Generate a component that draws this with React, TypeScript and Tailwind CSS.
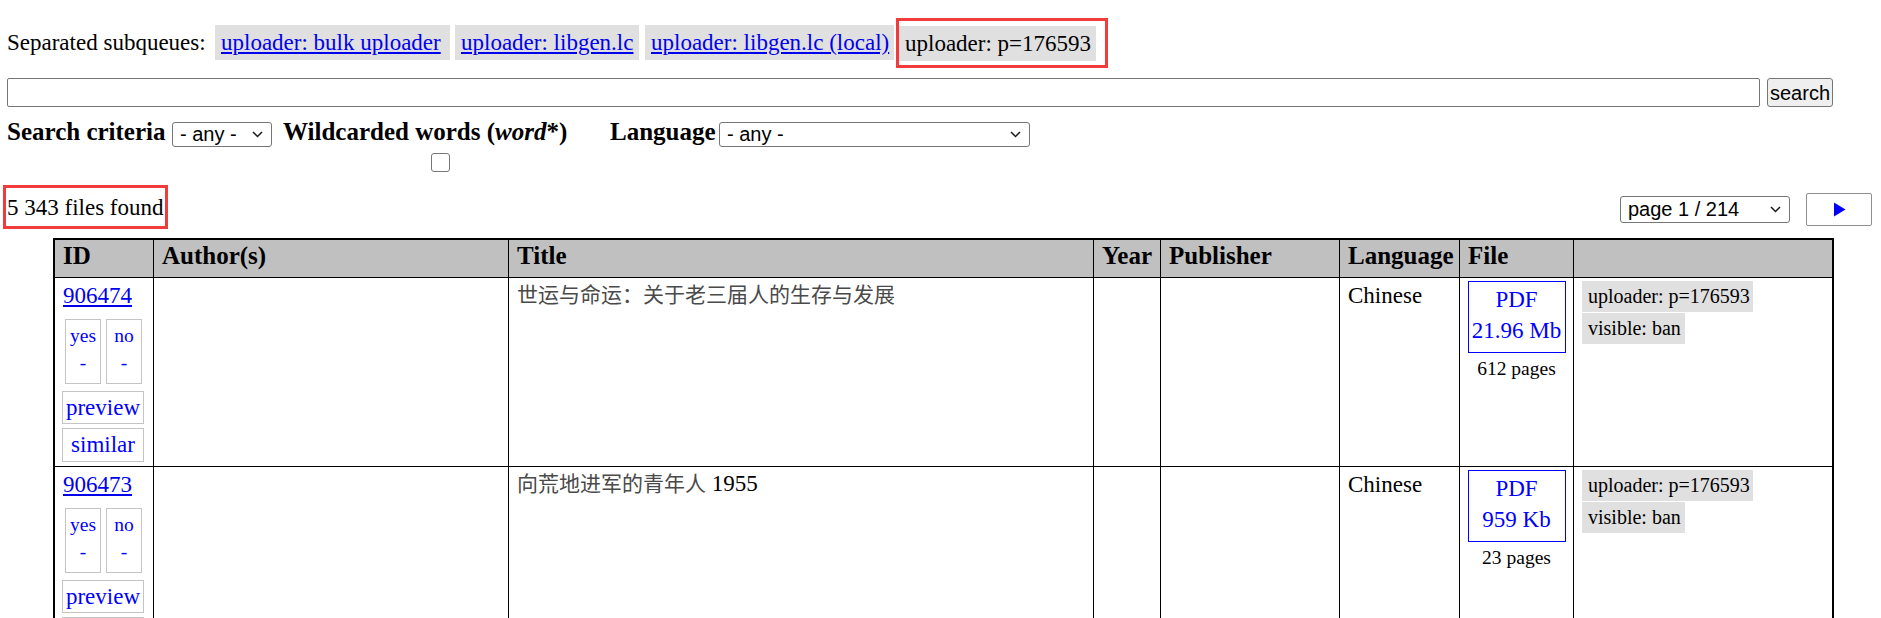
import React from "react";

function Chevron() {
  return (
    <svg width="11" height="7" viewBox="0 0 11 7" className="shrink-0">
      <path d="M1 1 L5.5 5.5 L10 1" fill="none" stroke="#1a1a1a" strokeWidth="1.5" />
    </svg>
  );
}

function Select({ label, className }: { label: string; className: string }) {
  return (
    <div
      className={`flex items-center justify-between border border-[#767676] rounded-[3px] bg-white pl-[7px] pr-[8px] font-['Liberation_Sans',Arial,sans-serif] text-[20px] text-black ${className}`}
    >
      <span className="leading-[23px] whitespace-nowrap">{label}</span>
      <Chevron />
    </div>
  );
}

type Row = {
  id: string;
  title: string;
  titleExtra?: string;
  size: string;
  pages: string;
};

const rows: Row[] = [
  {
    id: "906474",
    title: "世运与命运：关于老三届人的生存与发展",
    size: "21.96 Mb",
    pages: "612 pages",
  },
  {
    id: "906473",
    title: "向荒地进军的青年人",
    titleExtra: " 1955",
    size: "959 Kb",
    pages: "23 pages",
  },
];

const gridCols =
  "grid grid-cols-[99px_355px_585px_67px_179px_120px_114px_258px]";

function HeaderRow() {
  const cell =
    "h-[38px] bg-[#c0c0c0] border-b border-black pl-[8px] leading-[31px] font-bold text-[25px] whitespace-nowrap";
  return (
    <div className={gridCols}>
      <div className={`${cell} border-r`}>ID</div>
      <div className={`${cell} border-r`}>Author(s)</div>
      <div className={`${cell} border-r`}>Title</div>
      <div className={`${cell} border-r`}>Year</div>
      <div className={`${cell} border-r`}>Publisher</div>
      <div className={`${cell} border-r`}>Language</div>
      <div className={`${cell} border-r`}>File</div>
      <div className={cell}></div>
    </div>
  );
}

function DataRow({ row }: { row: Row }) {
  const cell = "h-[189px] border-b border-black";
  return (
    <div className={gridCols}>
      {/* ID */}
      <div className={`${cell} border-r pl-[7px] pt-[2px]`}>
        <div className="leading-[31px] pl-[1px]">
          <a className="text-[#0000ee] underline">{row.id}</a>
        </div>
        <div className="mt-[8px] ml-[3px] flex gap-[5px]">
          <div className="w-[36px] h-[65px] border border-[#c4c4c4] pt-[2px] text-center text-[19.5px] leading-[27px] text-[#0000ff]">
            <div>yes</div>
            <div>-</div>
          </div>
          <div className="w-[36px] h-[65px] border border-[#c4c4c4] pt-[2px] text-center text-[19.5px] leading-[27px] text-[#0000ff]">
            <div>no</div>
            <div>-</div>
          </div>
        </div>
        <div className="mt-[7px] w-[82px] h-[33px] border border-[#c4c4c4] text-center leading-[31px] text-[#0000ff]">
          preview
        </div>
        <div className="mt-[4px] w-[82px] h-[34px] border border-[#c4c4c4] text-center leading-[32px] text-[#0000ff]">
          similar
        </div>
      </div>
      {/* Author */}
      <div className={`${cell} border-r`}></div>
      {/* Title */}
      <div className={`${cell} border-r pl-[8px] pt-0 leading-[31px]`}>
        <span className="font-['Noto_Sans_CJK_SC',sans-serif] text-[21px] text-[#4a4a4a]">
          {row.title}
        </span>
        {row.titleExtra ? <span>{row.titleExtra}</span> : null}
      </div>
      {/* Year */}
      <div className={`${cell} border-r`}></div>
      {/* Publisher */}
      <div className={`${cell} border-r`}></div>
      {/* Language */}
      <div className={`${cell} border-r pl-[8px] pt-[2px] leading-[31px]`}>Chinese</div>
      {/* File */}
      <div className={`${cell} border-r pt-[3px] flex flex-col items-center`}>
        <div className="w-[98px] h-[72px] border border-[#0000ff] pt-[2px] text-center leading-[31px] text-[#0000ff] whitespace-nowrap">
          <div>PDF</div>
          <div>{row.size}</div>
        </div>
        <div className="mt-[2px] text-[19.5px] leading-[27px] whitespace-nowrap">{row.pages}</div>
      </div>
      {/* Tags */}
      <div className={`${cell} pl-[8px] pt-[3px]`}>
        <div className="w-[171px] h-[31px] bg-[#e0e0e0] pl-[6px] text-[20px] leading-[31px] whitespace-nowrap">
          uploader: p=176593
        </div>
        <div className="mt-[1px] w-[103px] h-[31px] bg-[#e0e0e0] pl-[6px] text-[20px] leading-[31px] whitespace-nowrap">
          visible: ban
        </div>
      </div>
    </div>
  );
}

export default function App() {
  return (
    <div className="h-[618px] w-[1881px] overflow-hidden bg-white text-black font-['Liberation_Serif','Times_New_Roman',serif] text-[23px] pl-[7px] pt-[25px]">
      {/* Subqueues */}
      <div className="flex items-center h-[35px] whitespace-nowrap">
        <span className="w-[208px] leading-[35px]">Separated subqueues:</span>
        <a className="w-[235px] h-[35px] bg-[#e0e0e0] px-[6px] leading-[35px] text-[#0000ee] underline">
          uploader: bulk uploader
        </a>
        <a className="ml-[5px] w-[184px] h-[35px] bg-[#e0e0e0] px-[6px] leading-[35px] text-[#0000ee] underline">
          uploader: libgen.lc
        </a>
        <a className="ml-[6px] w-[249px] h-[35px] bg-[#e0e0e0] px-[6px] leading-[35px] text-[#0000ee] underline">
          uploader: libgen.lc (local)
        </a>
        <div className="ml-[2px] border-[3px] border-[#f23b3b] pt-[5px] pb-[4px] pr-[9px]">
          <div className="w-[197px] h-[35px] bg-[#e0e0e0] px-[6px] leading-[35px]">
            uploader: p=176593
          </div>
        </div>
      </div>

      {/* Search */}
      <div className="mt-[18px] flex h-[29px]">
        <div className="w-[1753px] h-[29px] border border-[#767676] rounded-[2px] bg-white"></div>
        <div className="ml-[7px] w-[66px] h-[29px] border border-[#767676] rounded-[3px] bg-[#efefef] flex items-center justify-center font-['Liberation_Sans',Arial,sans-serif] text-[20px]">
          search
        </div>
      </div>

      {/* Criteria */}
      <div className="mt-[15px] flex items-start whitespace-nowrap">
        <span className="w-[165px] h-[25px] leading-[19px] font-bold text-[25px]">Search criteria</span>
        <Select label="- any -" className="w-[100px] h-[25px]" />
        <div className="ml-[11px] w-[291px] flex flex-col">
          <span className="h-[25px] leading-[19px] font-bold text-[25px]">
            Wildcarded words (<i>word</i>*)
          </span>
          <span className="mt-[6px] ml-[148px] w-[19px] h-[19px] border-[1.5px] border-[#767676] rounded-[3px] bg-white"></span>
        </div>
        <span className="ml-[36px] w-[103px] h-[25px] leading-[19px] font-bold text-[25px]">Language</span>
        <Select label="- any -" className="ml-[6px] w-[311px] h-[25px]" />
      </div>

      {/* Count + pager */}
      <div className="mt-[13px] -ml-[4px] w-[1869px] flex items-start justify-between">
        <div className="w-[165px] h-[44px] border-[3px] border-[#f23b3b] pl-[1px] pt-[2px] leading-[36px] whitespace-nowrap">
          5 343 files found
        </div>
        <div className="flex items-start">
          <Select label="page 1 / 214" className="mt-[11px] w-[170px] h-[27px]" />
          <div className="ml-[16px] mt-[8px] w-[66px] h-[33px] border border-[#8f8f8f] rounded-[2px] bg-white flex items-center justify-center">
            <svg width="13" height="15" viewBox="0 0 13 15">
              <path d="M1 0.5 L12.5 7.5 L1 14.5 Z" fill="#0000ff" />
            </svg>
          </div>
        </div>
      </div>

      {/* Table */}
      <div className="mt-[9px] ml-[46px] w-[1781px] border-x-2 border-t-2 border-black">
        <HeaderRow />
        {rows.map((r) => (
          <DataRow key={r.id} row={r} />
        ))}
      </div>
    </div>
  );
}
